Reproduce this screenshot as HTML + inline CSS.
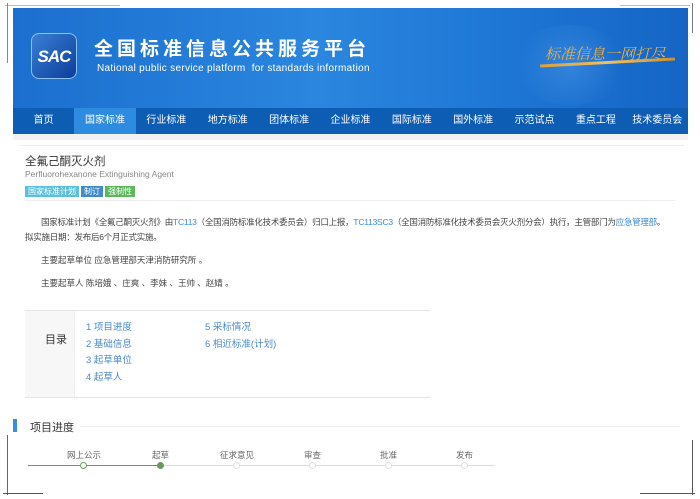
<!DOCTYPE html>
<html><head><meta charset="utf-8"><style>
*{margin:0;padding:0;box-sizing:border-box}
body{width:700px;height:499px;background:#fff;font-family:"Liberation Sans","Noto Sans CJK SC",sans-serif;position:relative;overflow:hidden;color:#333}
.abs{position:absolute}
.banner{left:13px;top:8px;width:675px;height:100px;background:linear-gradient(90deg,#1c6fcf 0%,#2a86de 45%,#1f78d6 70%,#1565c5 100%)}
.nav{left:13px;top:108px;width:675px;height:26px;background:#0d5db5;display:flex;font-size:10px;color:#fff}
.nav div{width:61.4px;text-align:center;line-height:26px}
.nav .on{background:#2d8be0}
.t{font-size:8.5px;color:#444}
a{color:#3a8ad0;text-decoration:none}
.tag{display:inline-block;font-size:8px;color:#fff;padding:0 3px;line-height:11px;margin-right:2px}
</style></head><body>
<div class="abs" style="left:5px;top:5px;width:115px;height:1px;background:#bbb"></div>
<div class="abs" style="left:7px;top:3px;width:1px;height:60px;background:#888"></div>
<div class="abs" style="left:620px;top:5px;width:70px;height:1px;background:#bbb"></div>
<div class="abs" style="left:692px;top:3px;width:1px;height:30px;background:#777"></div>
<div class="abs banner"></div>
<div class="abs" style="left:510px;top:25px;width:120px;height:80px;border-radius:50%;background:radial-gradient(circle,rgba(120,190,255,.25),rgba(40,130,220,0) 70%)"></div>
<div class="abs" style="left:31px;top:33px;width:46px;height:46px;border-radius:8px;background:linear-gradient(135deg,#3a7fd6,#0b3e99);border:1px solid #8cc0f0;color:#fff;font-weight:bold;font-style:italic;font-size:17px;line-height:46px;text-align:center;letter-spacing:-1px">SAC</div>
<div class="abs" style="left:94px;top:34px;font-size:19px;color:#fff;letter-spacing:4px;font-weight:bold">全国标准信息公共服务平台</div>
<div class="abs" style="left:97px;top:63px;font-size:10px;color:#fff;letter-spacing:.3px">National public service platform&nbsp; for standards information</div>
<div class="abs" style="left:545px;top:43px;font-size:15px;color:#e8b24a;font-style:italic;font-family:'Noto Serif CJK SC',serif">标准信息一网打尽</div>
<div class="abs" style="left:540px;top:61px;width:135px;height:3px;background:linear-gradient(90deg,#d8a040,#f0c060,#c89038);transform:rotate(-3deg)"></div>
<div class="abs nav"><div>首页</div><div class="on">国家标准</div><div>行业标准</div><div>地方标准</div><div>团体标准</div><div>企业标准</div><div>国际标准</div><div>国外标准</div><div>示范试点</div><div>重点工程</div><div>技术委员会</div></div>
<div class="abs" style="left:13px;top:134px;width:675px;height:6px;background:#f2f2f2"></div>
<div class="abs" style="left:18px;top:145px;width:666px;height:1px;background:#eee"></div>
<div class="abs" style="left:25px;top:153px;font-size:11.5px;color:#333">全氟己酮灭火剂</div>
<div class="abs" style="left:25px;top:169px;font-size:8.5px;color:#888">Perfluorohexanone Extinguishing Agent</div>
<div class="abs" style="left:25px;top:181px"><span class="tag" style="background:#5bc0de">国家标准计划</span><span class="tag" style="background:#428bca">制订</span><span class="tag" style="background:#5cb85c">强制性</span></div>
<div class="abs" style="left:25px;top:200px;width:650px;height:1px;background:#eee"></div>
<div class="abs t" style="left:25px;top:215px;line-height:15px;text-indent:16px;letter-spacing:-0.25px;white-space:nowrap">国家标准计划《全氟己酮灭火剂》由<a>TC113</a>（全国消防标准化技术委员会）归口上报，<a>TC113SC3</a>（全国消防标准化技术委员会灭火剂分会）执行，主管部门为<a>应急管理部</a>。<br>拟实施日期：发布后6个月正式实施。</div>
<div class="abs t" style="left:41px;top:254px">主要起草单位 应急管理部天津消防研究所 。</div>
<div class="abs t" style="left:41px;top:277px">主要起草人 陈培娥 、庄爽 、李妹 、王帅 、赵婧 。</div>
<div class="abs" style="left:25px;top:310px;width:405px;height:88px;border-top:1px solid #e5e5e5;border-bottom:1px solid #e5e5e5"></div>
<div class="abs" style="left:25px;top:311px;width:50px;height:86px;background:#f7f7f7;border-right:1px solid #eee"></div>
<div class="abs" style="left:45px;top:331px;font-size:11px">目录</div>
<div class="abs" style="left:86px;top:320px;font-size:9.5px;line-height:16.5px;color:#4a8ac8">1 项目进度<br>2 基础信息<br>3 起草单位<br>4 起草人</div>
<div class="abs" style="left:205px;top:320px;font-size:9.5px;line-height:16.5px;color:#4a8ac8">5 采标情况<br>6 相近标准(计划)</div>
<div class="abs" style="left:13px;top:419px;width:4px;height:13px;background:#3a8de0"></div>
<div class="abs" style="left:30px;top:419px;font-size:11px;color:#333">项目进度</div>
<div class="abs" style="left:80px;top:426px;width:600px;height:1px;background:#eee"></div>
<div class="abs" style="left:28px;top:465px;width:132px;height:1px;background:#6a9a5a"></div>
<div class="abs" style="left:160px;top:465px;width:335px;height:1px;background:#ddd"></div>
<div class="abs" style="left:80px;top:462px;width:7px;height:7px;border-radius:50%;border:1px solid #6a9a5a;background:#fff"></div>
<div class="abs" style="left:157px;top:462px;width:7px;height:7px;border-radius:50%;background:#6a9a5a"></div>
<div class="abs" style="left:233px;top:462px;width:7px;height:7px;border-radius:50%;border:1px solid #ddd;background:#fff"></div>
<div class="abs" style="left:309px;top:462px;width:7px;height:7px;border-radius:50%;border:1px solid #ddd;background:#fff"></div>
<div class="abs" style="left:385px;top:462px;width:7px;height:7px;border-radius:50%;border:1px solid #ddd;background:#fff"></div>
<div class="abs" style="left:461px;top:462px;width:7px;height:7px;border-radius:50%;border:1px solid #ddd;background:#fff"></div>
<div class="abs" style="left:67px;top:449px;font-size:8.5px;color:#666">网上公示</div>
<div class="abs" style="left:152px;top:449px;font-size:8.5px;color:#666">起草</div>
<div class="abs" style="left:220px;top:449px;font-size:8.5px;color:#666">征求意见</div>
<div class="abs" style="left:304px;top:449px;font-size:8.5px;color:#666">审查</div>
<div class="abs" style="left:380px;top:449px;font-size:8.5px;color:#666">批准</div>
<div class="abs" style="left:456px;top:449px;font-size:8.5px;color:#666">发布</div>
<div class="abs" style="left:7px;top:435px;width:1px;height:60px;background:#666"></div>
<div class="abs" style="left:3px;top:493px;width:40px;height:1px;background:#555"></div>
<div class="abs" style="left:692px;top:440px;width:1px;height:55px;background:#555"></div>
<div class="abs" style="left:640px;top:493px;width:55px;height:1px;background:#555"></div>
</body></html>
